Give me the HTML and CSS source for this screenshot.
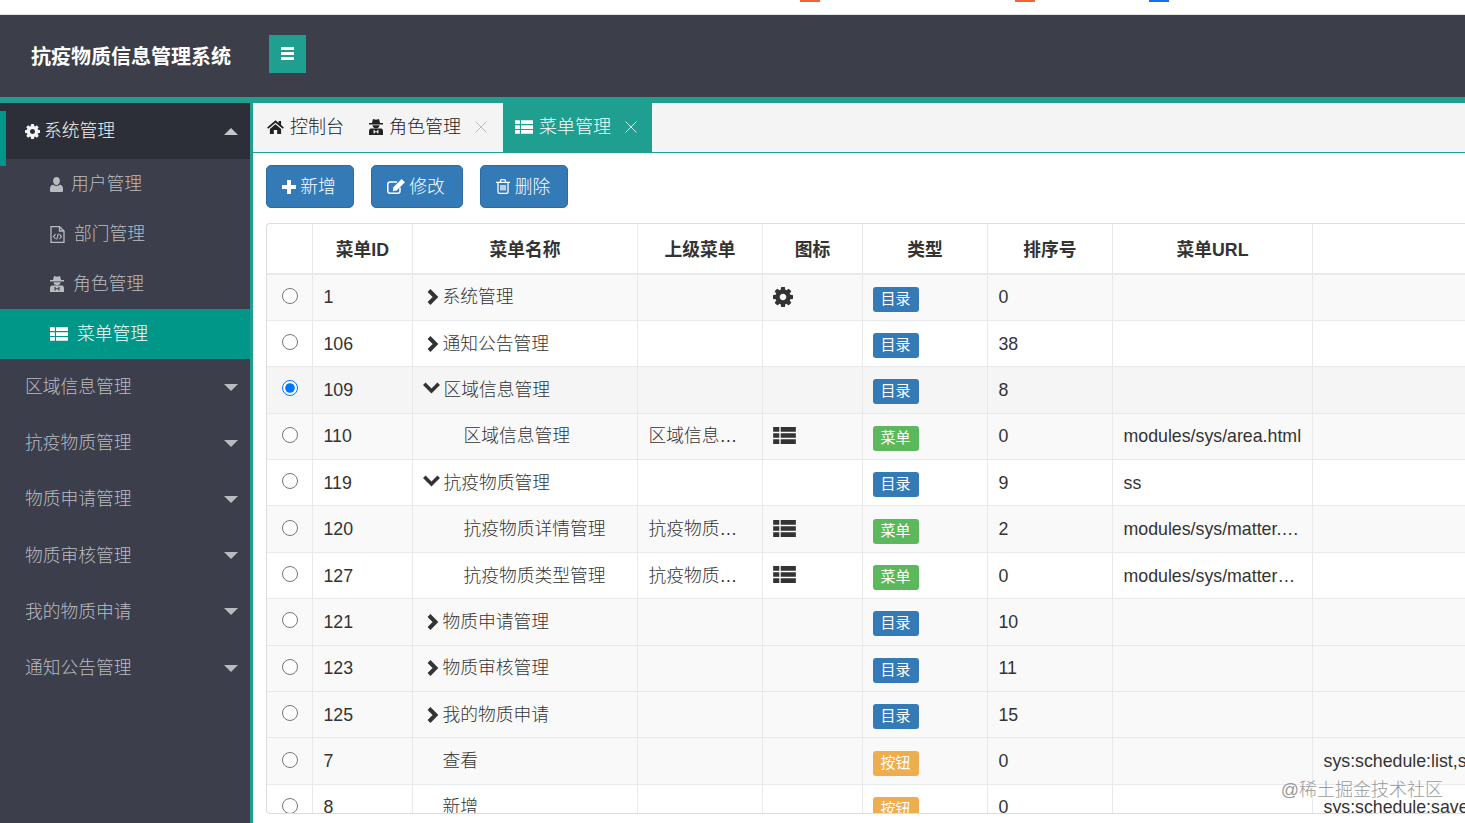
FILE: index.html
```html
<!DOCTYPE html>
<html lang="zh-CN">
<head>
<meta charset="utf-8">
<title>抗疫物质信息管理系统</title>
<link rel="stylesheet" href="styles.css">
</head>
<body>
<svg class="sprite" aria-hidden="true">
  <defs>
    <symbol id="i-cog" viewBox="128 128 1536 1536"><path fill="currentColor" d="M1152 896q0-106-75-181t-181-75-181 75-75 181 75 181 181 75 181-75 75-181zm512-109v222q0 12-8 23t-20 13l-185 28q-19 54-39 91 35 50 107 138 10 12 10 25t-9 23q-27 37-99 108t-94 71q-12 0-26-9l-138-108q-44 23-91 38-16 136-29 186-7 28-36 28h-222q-14 0-24.5-8.5t-11.5-21.5l-28-184q-49-16-90-37l-141 107q-10 9-25 9-14 0-25-11-126-114-165-168-7-10-7-23 0-12 8-23 15-21 51-66.5t54-70.5q-27-50-41-99l-183-27q-13-2-21-12.5t-8-23.5v-222q0-12 8-23t19-13l186-28q14-46 39-92-40-57-107-138-10-12-10-24 0-10 9-23 26-36 98.5-107.5t94.5-71.5q13 0 26 10l138 107q44-23 91-38 16-136 29-186 7-28 36-28h222q14 0 24.5 8.5t11.5 21.5l28 184q49 16 90 37l142-107q9-9 24-9 13 0 25 10 129 119 165 170 7 8 7 22 0 12-8 23-15 21-51 66.5t-54 70.5q26 50 41 98l183 28q13 2 21 12.5t8 23.5z"/></symbol>
    <symbol id="i-list" viewBox="0 0 24 18"><path fill="currentColor" d="M0 0h6.500v5H0zM8 0h16v5H8zM0 6.500h6.500v5H0zM8 6.500h16v5H8zM0 13h6.500v5H0zM8 13h16v5H8z"/></symbol>
    <symbol id="i-home" viewBox="0 0 18 15"><path fill="currentColor" d="M9 .3 12.400 3.200V1h2.600v4.400L18 8l-1.200 1.400L9 2.900 1.200 9.400 0 8zM3 9.600 9 4.600l6 5V15h-4.200v-4.200H7.200V15H3z"/></symbol>
    <symbol id="i-user" viewBox="0 0 14 16"><path fill="currentColor" d="M7 0c2.100 0 3.700 1.700 3.700 4S9.100 8.600 7 8.600 3.300 6.300 3.300 4 4.900 0 7 0zM3.600 8.200C4.500 9 5.700 9.500 7 9.500s2.500-.5 3.400-1.300c2.300.2 3.600 1.800 3.600 4v2.400c0 .8-.6 1.400-1.400 1.400H1.400C.6 16 0 15.400 0 14.600v-2.400c0-2.200 1.300-3.800 3.600-4z"/></symbol>
    <symbol id="i-secret" viewBox="0 0 14 16"><path fill="currentColor" fill-rule="evenodd" d="M4 0 7 .8 10 0l1 4h3v1.400H0V4h3zM3.500 6.200h7c0 1.800-1.500 3-3.500 3s-3.500-1.200-3.500-3zM1.500 9.500h11c1 .6 1.500 1.800 1.500 3V16H0v-3.500c0-1.200.5-2.400 1.500-3zM4.500 11v3.500h1.200v-1.300h2.600v1.300h1.200V11H8.300v1.200H5.700V11z"/></symbol>
    <symbol id="i-file" viewBox="0 0 15 17"><path fill="none" stroke="currentColor" stroke-width="1.300" d="M1 .7h8.500L14 5v11.300H1zM9.500 .7V5H14"/><path fill="none" stroke="currentColor" stroke-width="1.100" d="M5.600 8.200 3.500 10.600l2.100 2.400M9.400 8.200l2.100 2.400-2.100 2.400M8.300 7.600 6.700 13.600"/></symbol>
    <symbol id="i-plus" viewBox="0 0 14 14"><path fill="currentColor" d="M5 0h4v5h5v4H9v5H5V9H0V5h5z"/></symbol>
    <symbol id="i-edit" viewBox="0 0 18 15"><path fill="none" stroke="currentColor" stroke-width="1.500" d="M13 8.500V12a2.200 2.200 0 0 1-2.200 2.200H3A2.200 2.200 0 0 1 .8 12V5.200A2.200 2.200 0 0 1 3 3h7"/><path fill="currentColor" d="M14.600 0 18 3.300 9.600 11.500 5.800 12.200 6.400 8.300z"/></symbol>
    <symbol id="i-trash" viewBox="0 0 14 15"><path fill="none" stroke="currentColor" stroke-width="1.300" d="M0 3.300h14M2 3.300V13c0 .8.500 1.300 1.200 1.300h7.600c.7 0 1.200-.5 1.200-1.300V3.300M4.500 3.300V2c0-.8.500-1.300 1.200-1.300h2.600c.7 0 1.200.5 1.200 1.300v1.300M5 6v5.500M7 6v5.500M9 6v5.500"/></symbol>
    <symbol id="i-right" viewBox="0 0 14 16"><path fill="none" stroke="currentColor" stroke-width="4" d="M3 1.500 9.500 8 3 14.500"/></symbol>
    <symbol id="i-down" viewBox="0 0 17 12"><path fill="none" stroke="currentColor" stroke-width="3.600" d="M1.300 1.800 8.500 9l7.200-7.200"/></symbol>
    <symbol id="i-x" viewBox="0 0 12 12"><path fill="none" stroke="currentColor" stroke-width="1" d="M.5.500l11 11M11.500.500l-11 11"/></symbol>
  </defs>
</svg>

<div class="top-strip">
  <span class="speck speck-red"></span>
  <span class="speck speck-red speck-second"></span>
  <span class="speck speck-blue"></span>
</div>

<header class="app-header">
  <h1 class="brand">抗疫物质信息管理系统</h1>
  <button class="menu-toggle" type="button" aria-label="菜单">
    <span></span><span></span><span></span>
  </button>
</header>

<div class="app-body">
  <nav class="sidebar">
    <span class="accent"></span>
    <a class="nav-top nav-open"><span class="nav-label"><svg class="ic ic-cog"><use href="#i-cog"/></svg>系统管理</span><i class="caret caret-up"></i></a>
    <a class="nav-sub"><svg class="ic ic-user"><use href="#i-user"/></svg>用户管理</a>
    <a class="nav-sub"><svg class="ic ic-file"><use href="#i-file"/></svg>部门管理</a>
    <a class="nav-sub"><svg class="ic ic-secret"><use href="#i-secret"/></svg>角色管理</a>
    <a class="nav-sub nav-active"><svg class="ic ic-list"><use href="#i-list"/></svg>菜单管理</a>
    <a class="nav-top"><span>区域信息管理</span><i class="caret"></i></a>
    <a class="nav-top"><span>抗疫物质管理</span><i class="caret"></i></a>
    <a class="nav-top"><span>物质申请管理</span><i class="caret"></i></a>
    <a class="nav-top"><span>物质审核管理</span><i class="caret"></i></a>
    <a class="nav-top"><span>我的物质申请</span><i class="caret"></i></a>
    <a class="nav-top"><span>通知公告管理</span><i class="caret"></i></a>
  </nav>

  <main class="content">
    <div class="tabs">
      <a class="tab tab-home"><svg class="ic ic-home"><use href="#i-home"/></svg>控制台</a>
      <a class="tab tab-role"><svg class="ic ic-secret"><use href="#i-secret"/></svg>角色管理<svg class="ic-x"><use href="#i-x"/></svg></a>
      <a class="tab tab-active"><svg class="ic ic-list"><use href="#i-list"/></svg>菜单管理<svg class="ic-x"><use href="#i-x"/></svg></a>
    </div>

    <div class="toolbar">
      <a class="btn btn-add"><svg class="ic ic-plus"><use href="#i-plus"/></svg>新增</a>
      <a class="btn btn-edit"><svg class="ic ic-edit"><use href="#i-edit"/></svg>修改</a>
      <a class="btn btn-del"><svg class="ic ic-trash"><use href="#i-trash"/></svg>删除</a>
    </div>

    <div class="table-box">
      <table class="grid">
        <colgroup>
          <col class="c-radio"><col class="c-id"><col class="c-name"><col class="c-parent"><col class="c-icon"><col class="c-type"><col class="c-order"><col class="c-url"><col class="c-perm">
        </colgroup>
        <thead>
          <tr><th></th><th>菜单ID</th><th>菜单名称</th><th>上级菜单</th><th>图标</th><th>类型</th><th>排序号</th><th>菜单URL</th><th></th></tr>
        </thead>
        <tbody>
          <tr class="odd"><td><input type="radio" name="m"></td><td>1</td><td><svg class="tree"><use href="#i-right"/></svg>系统管理</td><td></td><td><svg class="cell-ic cog"><use href="#i-cog"/></svg></td><td><span class="label blue">目录</span></td><td>0</td><td></td><td></td></tr>
          <tr><td><input type="radio" name="m"></td><td>106</td><td><svg class="tree"><use href="#i-right"/></svg>通知公告管理</td><td></td><td></td><td><span class="label blue">目录</span></td><td>38</td><td></td><td></td></tr>
          <tr class="sel"><td><input type="radio" name="m" checked></td><td>109</td><td><svg class="tree-d"><use href="#i-down"/></svg>区域信息管理</td><td></td><td></td><td><span class="label blue">目录</span></td><td>8</td><td></td><td></td></tr>
          <tr class="odd"><td><input type="radio" name="m"></td><td>110</td><td class="child">区域信息管理</td><td>区域信息…</td><td><svg class="cell-ic"><use href="#i-list"/></svg></td><td><span class="label green">菜单</span></td><td>0</td><td>modules/sys/area.html</td><td></td></tr>
          <tr><td><input type="radio" name="m"></td><td>119</td><td><svg class="tree-d"><use href="#i-down"/></svg>抗疫物质管理</td><td></td><td></td><td><span class="label blue">目录</span></td><td>9</td><td>ss</td><td></td></tr>
          <tr class="odd"><td><input type="radio" name="m"></td><td>120</td><td class="child">抗疫物质详情管理</td><td>抗疫物质…</td><td><svg class="cell-ic"><use href="#i-list"/></svg></td><td><span class="label green">菜单</span></td><td>2</td><td>modules/sys/matter.…</td><td></td></tr>
          <tr><td><input type="radio" name="m"></td><td>127</td><td class="child">抗疫物质类型管理</td><td>抗疫物质…</td><td><svg class="cell-ic"><use href="#i-list"/></svg></td><td><span class="label green">菜单</span></td><td>0</td><td>modules/sys/matter…</td><td></td></tr>
          <tr class="odd"><td><input type="radio" name="m"></td><td>121</td><td><svg class="tree"><use href="#i-right"/></svg>物质申请管理</td><td></td><td></td><td><span class="label blue">目录</span></td><td>10</td><td></td><td></td></tr>
          <tr class="odd"><td><input type="radio" name="m"></td><td>123</td><td><svg class="tree"><use href="#i-right"/></svg>物质审核管理</td><td></td><td></td><td><span class="label blue">目录</span></td><td>11</td><td></td><td></td></tr>
          <tr class="odd"><td><input type="radio" name="m"></td><td>125</td><td><svg class="tree"><use href="#i-right"/></svg>我的物质申请</td><td></td><td></td><td><span class="label blue">目录</span></td><td>15</td><td></td><td></td></tr>
          <tr class="odd"><td><input type="radio" name="m"></td><td>7</td><td class="leaf">查看</td><td></td><td></td><td><span class="label orange">按钮</span></td><td>0</td><td></td><td>sys:schedule:list,sys:schedule:info</td></tr>
          <tr><td><input type="radio" name="m"></td><td>8</td><td class="leaf">新增</td><td></td><td></td><td><span class="label orange">按钮</span></td><td>0</td><td></td><td>sys:schedule:save</td></tr>
        </tbody>
      </table>
    </div>
    <div class="watermark">@稀土掘金技术社区</div>
  </main>
</div>
</body>
</html>
```
FILE: styles.css
```css
* { box-sizing: border-box; }
html, body { margin: 0; height: 100%; overflow: hidden; }
body {
  font-family: "Liberation Sans", "Noto Sans CJK SC", sans-serif;
  font-size: 17.75px;
  font-weight: 300;
  line-height: 24px;
  color: #333;
  background: #fff;
  display: flex;
  flex-direction: column;
}
.sprite { width: 0; height: 0; position: absolute; }
.ic { display: inline-block; flex: none; vertical-align: middle; }

.top-strip { height: 15px; flex: none; background: #fff; border-bottom: 1px solid #e2e2e2; display: flex; align-items: flex-start; }
.speck { height: 2px; width: 20px; }
.speck-red { background: #f4603c; margin-left: 800px; }
.speck-second { margin-left: 195px; }
.speck-blue { background: #1a6ff0; margin-left: 114px; }

.app-header {
  height: 88px;
  flex: none;
  background: #3c3f4a;
  border-bottom: 6px solid #1e9f90;
  display: flex;
  align-items: flex-start;
  padding-left: 31px;
}
.brand { margin: 28px 0 0; font-size: 20px; line-height: 29px; font-weight: 700; color: #fff; width: 238px; }
.menu-toggle {
  width: 37px; height: 38px; margin-top: 20px; border: 0; padding: 12px 12px 0; background: #1e9f90;
  display: flex; flex-direction: column; gap: 2px;
}
.menu-toggle span { display: block; height: 3px; width: 13px; background: #fff; }

.app-body { flex: 1; display: flex; min-height: 0; }

.sidebar {
  width: 253px; flex: none; background: #3c3f4b; border-right: 3px solid #1e9f90;
  position: relative; color: #b9bbc0;
}
.accent { position: absolute; left: 0; top: 8px; width: 6px; height: 55px; background: #009688; }
.nav-top {
  height: 56.2px; display: flex; align-items: center; justify-content: space-between;
  padding: 0 12px 0 25px;
}
.nav-open { height: 56px; background: #2d2f38; color: #f4f4f4; }
.nav-label { display: flex; align-items: center; }
.caret { width: 0; height: 0; border: 7.500px solid transparent; border-bottom: 0; border-top: 7px solid #b9bbc0; }
.caret-up { border-top: 0; border-bottom: 7px solid #c4c6ca; }
.nav-sub { height: 50px; display: flex; align-items: center; padding-left: 50px; }
.nav-active { background: #009688; color: #fff; }
.ic-cog { width: 15px; height: 15px; margin-right: 4px; }
.ic-user { width: 13px; height: 15px; margin-right: 8px; }
.ic-file { width: 15px; height: 17px; margin-right: 9px; }
.ic-secret { width: 14px; height: 16px; margin-right: 9px; }
.ic-list { width: 18px; height: 14px; margin-right: 9px; }

.content { flex: 1; min-width: 0; position: relative; display: flex; flex-direction: column; }

.tabs { height: 50px; flex: none; background: #f4f4f4; border-bottom: 1px solid #1e9f90; display: flex; color: #222; font-size: 18px; }
.tab { display: flex; align-items: center; height: 49px; padding-bottom: 2px; }
.tab-home { padding-left: 14px; width: 106px; }
.tab-home .ic-home { width: 17px; height: 14px; margin-right: 6px; }
.tab-role { padding-left: 10px; width: 144px; }
.tab-role .ic-secret { margin-right: 6px; }
.ic-x { width: 12px; height: 12px; margin-left: 14px; color: #bbb; }
.tab-active { background: #1e9f90; color: #fff; width: 149px; padding-left: 12px; height: 50px; padding-bottom: 3px; }
.tab-active .ic-list { margin-right: 6px; }
.tab-active .ic-x { color: #d5efec; }

.toolbar { height: 70px; flex: none; padding: 12px 0 0 13px; display: flex; align-items: flex-start; gap: 17px; }
.btn {
  height: 43px; display: flex; align-items: center; justify-content: center; gap: 4px;
  background: #337ab7; border: 1px solid #2e6da4; border-radius: 5px; color: #fff; padding-right: 2px;
}
.btn-add { width: 88px; }
.btn-edit { width: 92px; }
.btn-del { width: 88px; }
.ic-plus { width: 14px; height: 14px; }
.ic-edit { width: 18px; height: 15px; }
.ic-trash { width: 14px; height: 15px; margin-right: 1px; }

.table-box {
  margin-left: 13px; height: 591px; flex: none;
  border: 1px solid #ddd; border-right: 0; border-radius: 4px 0 0 4px; overflow: hidden;
}
.grid { border-collapse: collapse; table-layout: fixed; width: 1299px; }
.c-radio { width: 45px; }
.c-id { width: 100px; }
.c-name { width: 225px; }
.c-parent { width: 125px; }
.c-icon { width: 100px; }
.c-type { width: 125px; }
.c-order { width: 125px; }
.c-url { width: 200px; }
.c-perm { width: 254px; }
.grid th, .grid td { border-left: 1px solid #e6eaec; border-bottom: 1px solid #e6eaec; padding: 0 10px 0 11px; white-space: nowrap; overflow: hidden; text-align: left; }
.grid th:first-child, .grid td:first-child { border-left: 0; }
.grid thead tr { height: 50px; }
.grid th { text-align: center; font-weight: 700; border-bottom: 2px solid #e6eaec; padding-top: 2px; }
.grid tbody tr { height: 46.400px; }
.grid tr.odd { background: #f9f9f9; }
.grid tr.sel { background: #f5f5f5; }
.grid td:first-child { padding: 0 0 3px 15px; }
.grid input { width: 16px; height: 16px; margin: 0; display: block; }
.tree { width: 14px; height: 16px; margin: 0 3px 0 2px; vertical-align: -2px; color: #333; }
.tree-d { width: 17px; height: 12px; margin: 0 4px 0 -1px; vertical-align: 2px; color: #333; }
.child { padding-left: 51px !important; }
.leaf { padding-left: 30px !important; }
.cell-ic { width: 23px; height: 17px; display: block; margin: 0 0 2px -1px; color: #333; }
.cell-ic.cog { width: 20px; height: 20px; margin-bottom: 0; }
.label {
  display: inline-block; width: 46px; height: 25px; line-height: 23px; text-align: center;
  font-size: 15px; font-weight: 400; color: #fff; border-radius: 3px; margin: 4px 0 0 -1px; vertical-align: middle;
}
.blue { background: #337ab7; }
.green { background: #5cb85c; }
.orange { background: #f0ad4e; }

.watermark {
  position: absolute; right: 22px; bottom: 21px; font-size: 18px; line-height: 24px; color: #9a9a9a;
  text-shadow: 0 0 6px #fff;
}
```
